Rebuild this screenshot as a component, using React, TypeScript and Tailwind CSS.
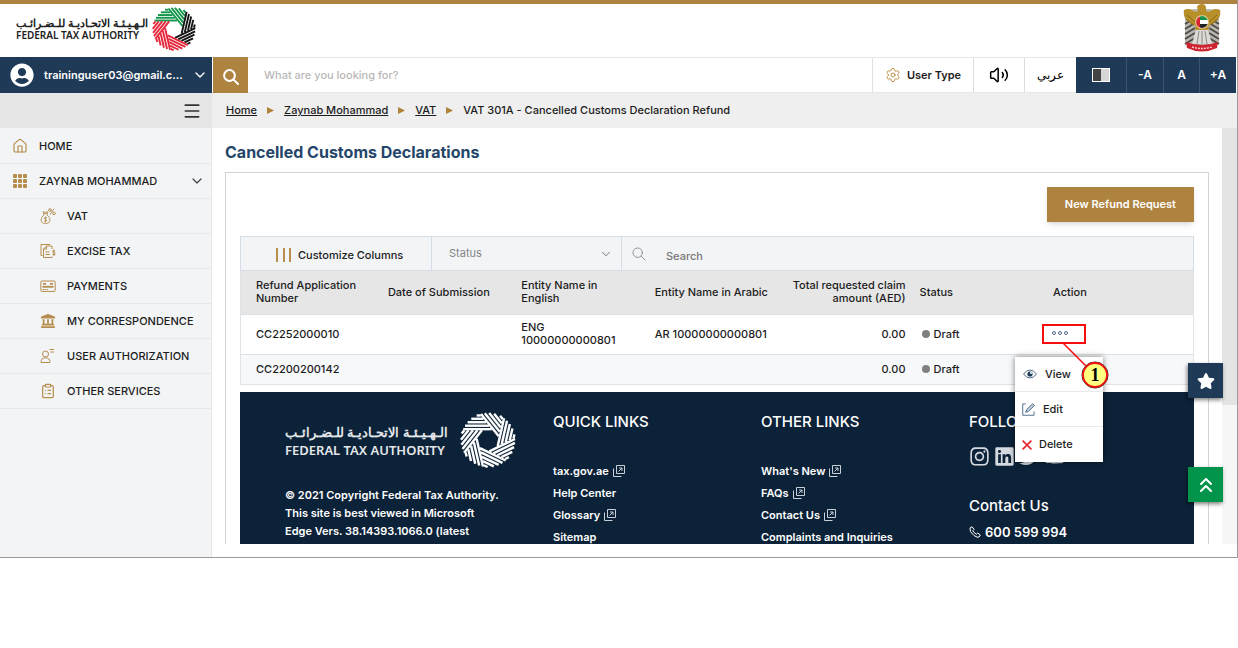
import type { ReactNode } from "react";
import { ChevronDown, ClipboardList, House, Menu, Settings, Volume2 } from "lucide-react";
import { FaInstagram, FaLandmark, FaLinkedin, FaStar, FaTwitter, FaUserCircle, FaYoutube } from "react-icons/fa";
import { FiChevronsUp } from "react-icons/fi";

const BLADES = ["green", "green", "black", "black", "red", "red", "red"] as const;
const BLADE_COLORS = { green: "#12964b", black: "#151515", red: "#e5273b" };

type ApertureProps = {
  mono?: boolean;
  className: string;
}

function Aperture({ mono, className }: ApertureProps) {
  const radius = 28;
  const hole = 10;
  const distances = [11.2, 14.8, 18.4, 22, 25.4];

  return (
    <svg viewBox="-29 -29 58 58" className={className} aria-hidden="true">
      {BLADES.map((blade, index) => (
        <g
          key={index}
          transform={`rotate(${(index * 360) / 7})`}
          stroke={mono ? "#ffffff" : BLADE_COLORS[blade]}
          strokeWidth="2.5"
        >
          {distances.map((d) => (
            <line
              key={d}
              x1={-Math.sqrt(radius * radius - d * d)}
              x2={(hole - 0.6235 * d) / 0.7818}
              y1={-d}
              y2={-d}
            />
          ))}
        </g>
      ))}
    </svg>
  )
}

function Emblem() {
  return (
    <svg viewBox="0 0 38 48" className="mb-1.5 h-12 w-[38px]" role="img" aria-label="United Arab Emirates">
      <path d="M13 5 L1 6 Q0 10 2 15 V40 L10 42 H28 L36 40 V15 Q38 10 37 6 L25 5 Z" fill="#b9b6b0" />
      <path d="M2 20 L12 14 M2 25 L12 19 M2 30 L12 24 M2 35 L12 29 M2 40 L12 34 M36 20 L26 14 M36 25 L26 19 M36 30 L26 24 M36 35 L26 29 M36 40 L26 34" stroke="#4d4a46" strokeWidth="1.8" />
      <path d="M19 0 Q22 0 23 3 L23 7 Q26 9 29 6 Q33 4 37 6 Q38 11 35 15 Q30 21 26 21 L25 28 H13 L12 21 Q8 21 3 15 Q0 11 1 6 Q5 4 9 6 Q12 9 15 7 L14 3 Q15 0 19 0 Z" fill="#b98f2a" />
      <path d="M4 11 L12 18 M3 15 L11 21 M34 11 L26 18 M35 15 L27 21" stroke="#86691c" strokeWidth="1" />
      <path d="M13 26 L9 40 H29 L25 26 Z" fill="#dddbd7" />
      <path d="M16 27 L14 40 M19 27 V40 M22 27 L24 40" stroke="#8d8a86" />
      <circle cx="19" cy="18" r="7" fill="#d9c588" />
      <circle cx="19" cy="18" r="6" fill="#ffffff" />
      <path d="M17 12.4 A6 6 0 0 1 24.6 16 H17 Z" fill="#16924a" />
      <path d="M17 20 H24.6 A6 6 0 0 1 17 23.6 Z" fill="#222222" />
      <path d="M17 12.4 A6 6 0 0 0 17 23.6 Z" fill="#d6232d" />
      <path d="M3 38 Q19 44 35 38 L34 44 Q19 51 4 44 Z" fill="#cf2330" />
      <path d="M9 43 Q19 46 29 43" stroke="#f3c6c9" strokeWidth="1.4" strokeDasharray="2 1" fill="none" />
    </svg>
  )
}

function SearchGlyph({ className, weight }: { className: string; weight: string }) {
  return (
    <svg viewBox="0 0 16 16" className={className} fill="none" stroke="currentColor" strokeWidth={weight} strokeLinecap="round" aria-hidden="true">
      <circle cx="6.5" cy="6.5" r="5.4" />
      <path d="M10.6 10.6 L15 15" />
    </svg>
  )
}

function Glyph({ children }: { children: ReactNode }) {
  return (
    <svg viewBox="0 0 16 16" className="size-4" fill="none" stroke="currentColor" aria-hidden="true">
      {children}
    </svg>
  )
}

function GridGlyph() {
  return (
    <Glyph>
      {[1, 6, 11].map((y) => [1, 6, 11].map((x) => (
        <rect key={`${x}-${y}`} x={x} y={y} width="4" height="4" rx="1" fill="currentColor" stroke="none" />
      )))}
    </Glyph>
  )
}

function VatGlyph() {
  return (
    <Glyph>
      <path d="M3.5 5.5 H7.5 L7 7 Q10 9 10 12 Q10 15.5 5.5 15.5 Q1 15.5 1 12 Q1 9 4 7 Z M3.8 5.3 L3 3.8 L5.5 4.3 L8 3.8 L7.4 5.3" strokeWidth=".9" />
      <path d="M7 9.8 Q5.5 9 4.6 9.8 Q4 11 5.5 11.4 Q7.2 11.8 6.5 13 Q5.5 13.8 4 13 M5.5 8.6 V14.2" strokeWidth=".9" />
      <path d="M10 6.5 L14 .8" />
      <circle cx="10" cy="2" r="1.3" />
      <circle cx="14" cy="5.4" r="1.3" />
    </Glyph>
  )
}

function ExciseGlyph() {
  return (
    <Glyph>
      <path d="M2.5 12.5 H1 V1.5 H10 M3.5 6 L6.5 3 H12 V6 M3.5 6 V14.5 H12 V13.5 M3.5 6 H6.5 V3 M5.5 9 H9.5 M5.5 11.5 H10" />
      <path d="M15.2 8 Q13.5 7 12.7 8 Q12.3 9.2 13.8 9.6 Q15.6 10 15 11.4 Q14 12.2 12.4 11.4 M13.9 6.6 V12.8" />
    </Glyph>
  )
}

function PaymentsGlyph() {
  return (
    <Glyph>
      <rect x=".8" y="3" width="14.4" height="10.4" rx="1" />
      <path d="M2.5 8.8 H13.5" strokeWidth="1.8" />
      <path d="M3 5.8 H6 M10 5.8 H13" strokeWidth="1.8" />
      <path d="M2.5 11.5 H8" strokeDasharray="1.5 .7" />
    </Glyph>
  )
}

function UserAuthGlyph() {
  return (
    <Glyph>
      <circle cx="5.5" cy="6" r="3" />
      <path d="M1 14.5 Q1 9.8 5.5 9.8 Q10 9.8 10 14.5 Z M9.5 1.5 H14 M10.5 4 H14" />
    </Glyph>
  )
}

type NavItem = {
  label: string;
  icon: ReactNode;
  nested?: boolean;
  expandable?: boolean;
}

const NAV_ITEMS: NavItem[] = [
  { label: "HOME", icon: <House className="size-4" strokeWidth={1.8} /> },
  { label: "ZAYNAB MOHAMMAD", icon: <GridGlyph />, expandable: true },
  { label: "VAT", icon: <VatGlyph />, nested: true },
  { label: "EXCISE TAX", icon: <ExciseGlyph />, nested: true },
  { label: "PAYMENTS", icon: <PaymentsGlyph />, nested: true },
  { label: "MY CORRESPONDENCE", icon: <FaLandmark className="size-3.5" />, nested: true },
  { label: "USER AUTHORIZATION", icon: <UserAuthGlyph />, nested: true },
  { label: "OTHER SERVICES", icon: <ClipboardList className="size-4" strokeWidth={1.8} />, nested: true },
];

function Sidebar() {
  return (
    <aside className="w-[212px] shrink-0 border-r border-[#e4e6e8] bg-[#f2f4f6]">
      <div className="flex h-[35px] items-center justify-end bg-[#e6e6e6] pr-[9px]">
        <button type="button" aria-label="Toggle menu">
          <Menu className="size-5 text-[#333]" strokeWidth={2} />
        </button>
      </div>
      <nav className="pt-px">
        {NAV_ITEMS.map((item) => (
          <a
            key={item.label}
            href="#"
            className={`flex h-[35px] items-center gap-[11px] border-b border-[#e6e8ea] text-[11px] font-medium text-[#1c1c1c] ${item.nested ? "pl-10" : "pl-3"}`}
          >
            <span className="flex w-4 justify-center text-[#b58d4d]">{item.icon}</span>
            {item.label}
            {item.expandable && <ChevronDown className="mr-1.5 ml-auto size-4 text-[#444]" strokeWidth={1.8} />}
          </a>
        ))}
      </nav>
    </aside>
  )
}

function TopBar() {
  return (
    <div className="flex h-9 border-y border-[#e6e6e6] bg-white text-xs font-semibold">
      <button type="button" className="-my-px flex w-[212px] shrink-0 items-center bg-[#1f3a57] pl-2.5 text-[11px] text-white">
        <FaUserCircle className="mr-2.5 size-6" />
        traininguser03@gmail.c...
        <ChevronDown className="mr-1 ml-auto size-4" strokeWidth={2} />
      </button>
      <button type="button" aria-label="Search site" className="-my-px ml-px flex w-[35px] shrink-0 items-center justify-center bg-[#ae8340] text-white">
        <SearchGlyph className="mt-1 size-4" weight="2" />
      </button>
      <input
        aria-label="Search site"
        placeholder="What are you looking for?"
        className="min-w-0 flex-1 px-4 text-[11px] font-medium outline-none placeholder:text-[#b8b8b8]"
      />
      <button type="button" className="flex w-[101px] items-center justify-center gap-1.5 border-l border-[#e0e0e0] text-[11px] text-[#1c1c1c]">
        <Settings className="size-4 text-[#c1924c]" strokeWidth={1.5} />
        User Type
      </button>
      <button type="button" aria-label="Read aloud" className="flex w-[51px] items-center justify-center border-l border-[#dcdcdc]">
        <Volume2 className="size-5" strokeWidth={1.8} />
      </button>
      <button type="button" lang="ar" className="w-[52px] border-l border-[#dcdcdc] font-medium">عربي</button>
      <div className="-my-px mr-px flex divide-x divide-[#3b536d] bg-[#1f3a57] text-white">
        <button type="button" aria-label="Contrast" className="flex w-[51px] items-center justify-center">
          <span className="flex h-3.5 w-[18px] border border-white bg-[#d7d7d7]">
            <span className="w-1/2 bg-[#444]" />
          </span>
        </button>
        <button type="button" className="w-[37px]">-A</button>
        <button type="button" className="w-9">A</button>
        <button type="button" className="w-9">+A</button>
      </div>
    </div>
  )
}

function Crumbs() {
  const links = ["Home", "Zaynab Mohammad", "VAT"];

  return (
    <nav aria-label="Breadcrumb" className="flex h-[35px] items-center bg-[#efefef] pl-3.5 text-[11px] font-medium text-[#1c1c1c]">
      {links.map((link) => (
        <span key={link} className="flex items-center">
          <a href="#" className="underline">{link}</a>
          <svg viewBox="0 0 7 7" className="mx-2.5 size-[7px]" aria-hidden="true">
            <path d="M0 0 L7 3.5 L0 7 Z" fill="#b0823a" />
          </svg>
        </span>
      ))}
      <span>VAT 301A - Cancelled Customs Declaration Refund</span>
    </nav>
  )
}

function ActionMenu() {
  return (
    <div className="absolute top-full left-[-28px] z-20 mt-[13px] w-[88px] divide-y divide-[#e8eaee] bg-white shadow-[0_0_6px_rgba(0,0,0,0.5)]">
      <button type="button" className="flex h-[35px] w-full items-center gap-2 pl-2">
        <svg viewBox="0 0 14 10" className="h-2.5 w-3.5" aria-hidden="true">
          <path d="M.5 5 Q7 -3 13.5 5 Q7 13 .5 5 Z" fill="none" stroke="#3a5878" strokeWidth=".9" />
          <circle cx="7" cy="5" r="2.6" fill="#1f3a57" />
          <circle cx="8" cy="4" r="1" fill="#ffffff" />
        </svg>
        View
      </button>
      <button type="button" className="flex h-[35px] w-full items-center gap-2 pl-[7px]">
        <svg viewBox="0 0 14 14" className="size-[13px]" fill="none" stroke="#4a6684" aria-hidden="true">
          <path d="M4 1 H.8 V13.2 H13 V9" />
          <path d="M4 10 L5 7 L11.5 .8 L13.4 2.6 L7 9 Z" fill="#c3cedb" />
        </svg>
        Edit
      </button>
      <button type="button" className="flex h-[35px] w-full items-center gap-[7px] pl-[7px]">
        <svg viewBox="0 0 10 10" className="size-2.5" stroke="#e8252f" strokeWidth="1.7" aria-hidden="true">
          <path d="M.6 .6 L9.4 9.4 M9.4 .6 L.6 9.4" />
        </svg>
        Delete
      </button>
    </div>
  )
}

function Callout() {
  return (
    <div className="pointer-events-none absolute top-0 left-[-1px] z-30 h-5 w-11 border-2 border-[#f60d0d]">
      <svg viewBox="0 0 50 48" className="absolute top-4 left-[17px] h-12 w-[50px] max-w-none" aria-hidden="true">
        <path d="M2 1 L28 27" stroke="#f60d0d" strokeWidth="1.6" />
        <circle cx="34" cy="33" r="13" fill="#ffff80" stroke="#222222" />
        <circle cx="34" cy="33" r="12" fill="none" stroke="#f60d0d" strokeWidth="1.8" />
      </svg>
      <span className="absolute top-[37px] left-11 w-3.5 text-center font-['Liberation_Serif',serif] text-lg leading-6 font-bold text-black">1</span>
    </div>
  )
}

type Declaration = {
  number: string;
  english: string;
  arabic: string;
  amount: string;
  open?: boolean;
}

const DECLARATIONS: Declaration[] = [
  { number: "CC2252000010", english: "ENG 10000000000801", arabic: "AR 10000000000801", amount: "0.00", open: true },
  { number: "CC2200200142", english: "", arabic: "", amount: "0.00" },
];

function DeclarationsTable() {
  return (
    <table className="w-full table-fixed border-x border-b border-[#dde4ea] text-left text-[11px] leading-[13px] font-medium text-[#1c1c1c]">
      <thead className="bg-[#e6e6e6]">
        <tr className="h-[43px]">
          <th className="w-[14%] pl-[15px] font-medium">Refund Application Number</th>
          <th className="w-[14%] pl-3.5 font-medium">Date of Submission</th>
          <th className="w-[14%] pr-4 pl-3.5 font-medium">Entity Name in English</th>
          <th className="w-[14%] pl-3.5 font-medium whitespace-nowrap">Entity Name in Arabic</th>
          <th className="w-[14%] pr-0.5 text-right font-medium">Total requested claim amount (AED)</th>
          <th className="w-[14%] pl-3 font-medium">Status</th>
          <th className="pl-3 font-medium">Action</th>
        </tr>
      </thead>
      <tbody>
        {DECLARATIONS.map((row) => (
          <tr key={row.number} className={`border-t border-[#dde2e6] ${row.open ? "h-10" : "h-[30px] bg-[#f6f8fa]"}`}>
            <td className="pl-[15px]">{row.number}</td>
            <td />
            <td className="pl-3.5">{row.english}</td>
            <td className="pl-3.5 whitespace-nowrap">{row.arabic}</td>
            <td className="pr-0.5 text-right">{row.amount}</td>
            <td className="pl-3.5">
              <span className="flex items-center gap-1">
                <span className="size-2 rounded-full bg-[#808080]" />
                Draft
              </span>
            </td>
            <td className="pl-0.5">
              {row.open && (
                <div className="relative">
                  <button type="button" aria-label="Row actions" className="flex h-5 w-[42px] items-center justify-center gap-0.5 pr-2 pb-0.5">
                    <span className="size-1 rounded-full border border-[#526b85]" />
                    <span className="size-1 rounded-full border border-[#526b85]" />
                    <span className="size-1 rounded-full border border-[#526b85]" />
                  </button>
                  <ActionMenu />
                  <Callout />
                </div>
              )}
            </td>
          </tr>
        ))}
      </tbody>
    </table>
  )
}

function Toolbar() {
  return (
    <div className="flex h-[35px] border border-[#d3dee8] bg-[#f2f4f6] text-[11px] font-medium">
      <button type="button" className="flex w-[190px] items-center gap-[7px] pt-[3px] pl-[35px] text-[#1c1c1c]">
        <span className="flex h-3.5 w-[15px] justify-between">
          <span className="w-0.5 bg-[#b98d4a]" />
          <span className="w-0.5 bg-[#b98d4a]" />
          <span className="w-0.5 bg-[#b98d4a]" />
        </span>
        Customize Columns
      </button>
      <div className="relative w-[191px] border-x border-[#d3dee8]">
        <select aria-label="Status" className="h-full w-full appearance-none px-[17px] font-normal text-[#858585]">
          <option>Status</option>
        </select>
        <ChevronDown className="pointer-events-none absolute top-2.5 right-2 size-3.5 text-[#666]" strokeWidth={1.5} />
      </div>
      <div className="flex flex-1 items-center pl-2.5 text-[#888]">
        <SearchGlyph className="size-3.5" weight="1" />
        <input
          type="search"
          aria-label="Search declarations"
          placeholder="Search"
          className="h-full min-w-0 flex-1 pt-1 pl-5 outline-none placeholder:text-[#777]"
        />
      </div>
    </div>
  )
}

function ExternalGlyph() {
  return (
    <svg viewBox="0 0 12 12" className="size-3" fill="none" stroke="#c9d0d8" aria-hidden="true">
      <path d="M3.5 .5 H11.5 V8.5 H3.5 Z M.5 3.5 V11.5 H8.5 M5.5 6.5 L9 3 M6 3 H9 V6" />
    </svg>
  )
}

type FooterLink = {
  label: string;
  external?: boolean;
}

function FooterLinks({ title, links }: { title: string; links: FooterLink[] }) {
  return (
    <div className="pt-5">
      <h2 className="mb-7 text-[15px] leading-5 font-medium">{title}</h2>
      <ul className="-mb-1">
        {links.map((link) => (
          <li key={link.label} className="h-[22px] leading-[22px]">
            <a href="#" className="inline-flex items-center gap-1 whitespace-nowrap">
              {link.label}
              {link.external && <ExternalGlyph />}
            </a>
          </li>
        ))}
      </ul>
    </div>
  )
}

const QUICK_LINKS: FooterLink[] = [
  { label: "tax.gov.ae", external: true },
  { label: "Help Center" },
  { label: "Glossary", external: true },
  { label: "Sitemap" },
];

const OTHER_LINKS: FooterLink[] = [
  { label: "What's New", external: true },
  { label: "FAQs", external: true },
  { label: "Contact Us", external: true },
  { label: "Complaints and Inquiries" },
];

function Footer() {
  return (
    <footer className="mt-[7px] grid grid-cols-[313fr_208fr_208fr_225fr] bg-[#0c2238] text-[11px] font-semibold text-white">
      <div className="pt-5 pl-[45px]">
        <div className="flex items-center gap-3">
          <div className="text-[#e4e7ea]">
            <p lang="ar" dir="rtl" className="text-[13px] leading-5 font-semibold whitespace-nowrap">الـهـيـئـة الاتحـاديـة للـضـرائـب</p>
            <p className="font-['Noto_Sans',sans-serif] text-[13px] leading-4 font-semibold whitespace-nowrap">FEDERAL TAX AUTHORITY</p>
          </div>
          <Aperture mono className="size-14 shrink-0" />
        </div>
        <p className="mt-[18px] leading-[18px]">
          © 2021 Copyright Federal Tax Authority.
          <br />
          This site is best viewed in Microsoft
          <br />
          Edge Vers. 38.14393.1066.0 (latest
        </p>
      </div>
      <FooterLinks title="QUICK LINKS" links={QUICK_LINKS} />
      <FooterLinks title="OTHER LINKS" links={OTHER_LINKS} />
      <div className="pt-5">
        <h2 className="text-[15px] leading-5 font-medium">FOLLOW US</h2>
        <div className="mt-3.5 flex gap-1 text-[#d5dae0]">
          <a href="#" aria-label="Instagram"><FaInstagram className="size-[21px]" /></a>
          <a href="#" aria-label="LinkedIn"><FaLinkedin className="size-[21px]" /></a>
          <a href="#" aria-label="Twitter"><FaTwitter className="size-[21px]" /></a>
          <a href="#" aria-label="YouTube"><FaYoutube className="size-[21px]" /></a>
        </div>
        <h2 className="mt-[29px] text-[15px] leading-5 font-medium">Contact Us</h2>
        <a href="tel:600599994" className="mt-1.5 flex items-center gap-1 text-[13px] leading-5">
          <svg viewBox="0 0 12 12" className="size-3" fill="none" stroke="#ffffff" aria-hidden="true">
            <path d="M1 2 L3 .7 L5 3.3 L3.8 4.7 Q5 7 7.4 8.2 L8.8 7 L11.3 9 L10 11 Q8.5 12 5 9.5 Q0 5.5 1 2 Z" />
          </svg>
          600 599 994
        </a>
      </div>
    </footer>
  )
}

export default function App() {
  return (
    <div className="min-h-screen bg-white font-['Inter','Noto_Sans',sans-serif]">
      <div className="relative border-r border-b border-[#9a9a9a]">
        <header className="flex h-[57px] items-center justify-between border-t-4 border-[#ae8340] pr-4 pl-4">
          <div className="mb-1 flex items-center gap-1">
            <div className="text-[#222]">
              <p lang="ar" dir="rtl" className="text-[11px] leading-3 font-semibold whitespace-nowrap">الـهـيـئـة الاتحـاديـة للـضـرائـب</p>
              <p className="font-['Noto_Sans',sans-serif] text-[10px] leading-3 font-semibold whitespace-nowrap">FEDERAL TAX AUTHORITY</p>
            </div>
            <Aperture className="size-11" />
          </div>
          <Emblem />
        </header>
        <TopBar />
        <div className="flex">
          <Sidebar />
          <main className="min-w-0 flex-1">
            <Crumbs />
            <div className="mb-[13px] flex">
              <div className="min-w-0 flex-1 pr-[13px] pl-[13px]">
                <h1 className="pt-3.5 pb-2.5 text-base leading-5 font-bold text-[#24466a]">Cancelled Customs Declarations</h1>
                <div className="border border-b-0 border-[#d4d4d4] px-3.5 pt-3.5">
                  <div className="mb-3.5 flex justify-end">
                    <button type="button" className="h-[35px] bg-[#ae8340] px-[18px] text-[11px] font-semibold text-white shadow-md">
                      New Refund Request
                    </button>
                  </div>
                  <Toolbar />
                  <DeclarationsTable />
                  <Footer />
                </div>
              </div>
              <div className="w-[15px] bg-[#f6f6f6]">
                <div className="h-2/3 bg-[#e4e4e4]" />
              </div>
            </div>
          </main>
        </div>
        <button type="button" aria-label="Favourites" className="absolute top-[363px] right-3.5 z-40 flex size-[35px] items-center justify-center bg-[#1f3a57] text-white shadow-[-1px_2px_4px_rgba(0,0,0,0.5)]">
          <FaStar className="size-[18px]" />
        </button>
        <button type="button" aria-label="Back to top" className="absolute top-[467px] right-3.5 z-40 flex size-[35px] items-center justify-center bg-[#03944b] text-white shadow-[-1px_2px_4px_rgba(0,0,0,0.5)]">
          <FiChevronsUp className="size-6" />
        </button>
      </div>
    </div>
  )
}
